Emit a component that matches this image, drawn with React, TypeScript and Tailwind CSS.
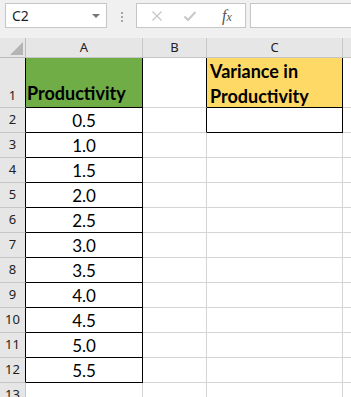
import React from "react";

const values = ["0.5", "1.0", "1.5", "2.0", "2.5", "3.0", "3.5", "4.0", "4.5", "5.0", "5.5"];

const cellFont = { fontFamily: "Lato, 'Open Sans', sans-serif" };
const uiFont = { fontFamily: "'Noto Sans', 'Open Sans', sans-serif" };

const RowHead = ({ n, tall, dark }: { n: number; tall?: boolean; dark?: boolean }) => (
  <div
    className={`flex justify-center bg-[#e6e6e6] border-b border-[#c6c6c6] border-r text-[13px] text-[#222] ${
      dark ? "border-r-black" : "border-r-[#c6c6c6]"
    } ${tall ? "h-[50px] items-end pb-[2px]" : "h-[25px] items-center"}`}
    style={uiFont}
  >
    {n}
  </div>
);

export default function App() {
  return (
    <div className="w-[351px] h-[397px] overflow-hidden bg-white select-none">
      {/* formula bar */}
      <div className="h-[38px] bg-[#f0f0f0] flex items-start pt-[3px]">
        <div
          className="ml-[5px] w-[102px] h-[25px] bg-white border border-[#c6c6c6] flex items-center pl-[6px] pr-[6px] text-[14px] text-[#222]"
          style={uiFont}
        >
          <span className="flex-1">C2</span>
          <span className="w-0 h-0 border-l-[4px] border-r-[4px] border-t-[4px] border-l-transparent border-r-transparent border-t-[#777]" />
        </div>
        <div className="ml-[14px] mt-[9px] flex flex-col gap-[2px]">
          <span className="w-[2px] h-[2px] bg-[#a6a6a6]" />
          <span className="w-[2px] h-[2px] bg-[#a6a6a6]" />
          <span className="w-[2px] h-[2px] bg-[#a6a6a6]" />
        </div>
        <div className="ml-[13px] w-[110px] h-[25px] bg-white border border-[#c6c6c6] flex items-center">
          <svg width="12" height="12" viewBox="0 0 12 12" className="ml-[14px]">
            <path d="M1.5 1.5 L10.5 10.5 M10.5 1.5 L1.5 10.5" stroke="#c8c8c8" strokeWidth="1.4" fill="none" />
          </svg>
          <svg width="14" height="12" viewBox="0 0 14 12" className="ml-[20px]">
            <path d="M1.5 6.5 L5 10 L12.5 2" stroke="#c8c8c8" strokeWidth="2" fill="none" />
          </svg>
          <span
            className="ml-[25px] text-[16px] italic text-[#555] leading-none"
            style={{ fontFamily: "'Liberation Serif', serif" }}
          >
            f<span className="text-[12px]">x</span>
          </span>
        </div>
        <div className="ml-[4px] flex-1 h-[25px] bg-white border border-[#c6c6c6] border-r-0" />
      </div>

      {/* sheet */}
      <div className="grid grid-cols-[26px_117px_64px_136px_1fr]">
        {/* column headers */}
        <div className="relative h-[20px] bg-[#e6e6e6] border-r border-b border-[#bcbcbc]">
          <span
            className="absolute left-[10px] top-[4px] w-0 h-0"
            style={{ borderLeft: "13px solid transparent", borderBottom: "13px solid #b4b4b4" }}
          />
        </div>
        {["A", "B", "C"].map((c) => (
          <div
            key={c}
            className="h-[20px] bg-[#e6e6e6] border-r border-b border-[#c6c6c6] flex items-center justify-center text-[13px] text-[#222]"
            style={uiFont}
          >
            {c}
          </div>
        ))}
        <div className="h-[20px] bg-[#e6e6e6] border-b border-[#c6c6c6]" />

        {/* row 1 */}
        <RowHead n={1} tall dark />
        <div
          className="h-[50px] bg-[#70ad47] border-r border-b border-black flex items-end pl-[1px] pb-[1px] text-[18px] font-bold text-black leading-[25px]"
          style={cellFont}
        >
          Productivity
        </div>
        <div className="h-[50px] border-r border-b border-r-black border-b-[#d4d4d4]" />
        <div
          className="h-[50px] bg-[#ffd966] border-r border-b border-black pl-[3px] text-[18px] font-bold text-black leading-[25px] pt-[1px]"
          style={cellFont}
        >
          Variance in
          <br />
          Productivity
        </div>
        <div className="h-[50px] border-b border-[#d4d4d4]" />

        {/* rows 2-12 */}
        {values.map((v, i) => (
          <React.Fragment key={v}>
            <RowHead n={i + 2} dark />
            <div
              className="h-[25px] border-r border-b border-black flex items-center justify-center pt-[2px] text-[17px] text-black"
              style={cellFont}
            >
              {v}
            </div>
            <div
              className={`h-[25px] border-r border-b border-b-[#d4d4d4] ${
                i === 0 ? "border-r-black" : "border-r-[#d4d4d4]"
              }`}
            />
            <div
              className={`h-[25px] border-r border-b ${
                i === 0 ? "border-black" : "border-[#d4d4d4]"
              }`}
            />
            <div className="h-[25px] border-b border-[#d4d4d4]" />
          </React.Fragment>
        ))}

        {/* row 13 */}
        <RowHead n={13} />
        <div className="h-[25px] border-r border-b border-[#d4d4d4]" />
        <div className="h-[25px] border-r border-b border-[#d4d4d4]" />
        <div className="h-[25px] border-r border-b border-[#d4d4d4]" />
        <div className="h-[25px] border-b border-[#d4d4d4]" />
      </div>
    </div>
  );
}
